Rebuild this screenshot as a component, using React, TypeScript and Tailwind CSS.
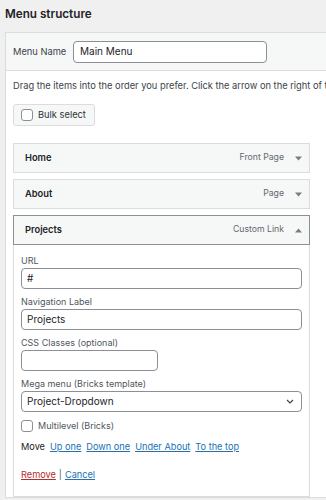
import React from 'react';

const font = { fontFamily: 'Inter, "Noto Sans", sans-serif' };

interface MenuItemProps {
  title: string;
  kind: string;
  open?: boolean;
}

const Caret = ({ up }: { up?: boolean }) => (
  <svg width="7" height="5" viewBox="0 0 7 5" className="ml-[11px]">
    {up ? <path d="M0 4.5 L3.5 0.5 L7 4.5 Z" fill="#787c82" /> : <path d="M0 0.5 L7 0.5 L3.5 4.5 Z" fill="#787c82" />}
  </svg>
);

const ItemBar: React.FC<MenuItemProps> = ({ title, kind, open }) => (
  <div
    className={`flex items-center h-[30px] pl-[11px] pr-[7px] bg-[#f6f7f7] border ${
      open ? 'border-[#8c8f94]' : 'border-[#dcdcde]'
    }`}
  >
    <span className="text-[9.3px] font-semibold text-[#1d2327]">{title}</span>
    <span className="ml-auto text-[8.7px] text-[#646970]">{kind}</span>
    <Caret up={open} />
  </div>
);

const Field = ({ label, value, narrow }: { label: string; value?: string; narrow?: boolean }) => (
  <div className="mb-[6px]">
    <div className="text-[9px] leading-[14px] text-[#50575e]">{label}</div>
    <div
      className={`h-[21px] border border-[#8c8f94] rounded-[4px] bg-white flex items-center px-[5px] text-[10px] text-[#1d2327] ${
        narrow ? 'w-[137px]' : 'w-full'
      }`}
    >
      {value}
    </div>
  </div>
);

const Box = () => (
  <span className="inline-block shrink-0 w-[12px] h-[12px] border border-[#8c8f94] rounded-[3px] bg-white" />
);

export default function App() {
  return (
    <div className="w-[326px] h-[500px] overflow-hidden bg-[#f0f0f1] text-[#1d2327]" style={font}>
      <h2 className="h-[32px] pl-[5px] pt-[6px] text-[11.7px] font-semibold leading-[16px]">Menu structure</h2>

      <div className="ml-[5px] w-[360px] bg-white border border-[#dcdcde]">
        <div className="h-[38px] bg-[#f6f7f7] border-b border-[#dcdcde] flex items-center pl-[7px]">
          <span className="text-[9.3px] text-[#3c434a] w-[60px] whitespace-nowrap">Menu Name</span>
          <div className="w-[194px] h-[22px] border border-[#8c8f94] rounded-[4px] bg-white flex items-center px-[6px] text-[10px]">
            Main Menu
          </div>
        </div>

        <div className="pl-[7px] pt-[5px]">
          <p className="text-[9.3px] leading-[20px] whitespace-nowrap text-[#3c434a]">
            Drag the items into the order you prefer. Click the arrow on the right of the item to reveal additional configuration options.
          </p>
          <button className="mt-[8px] h-[22px] pl-[7px] pr-[8px] flex items-center gap-[5px] bg-[#f6f7f7] border border-[#dcdcde] rounded-[3px] text-[9.3px] text-[#2c3338]">
            <Box />
            Bulk select
          </button>

          <div className="w-[297px] mt-[17px] flex flex-col gap-[6px]">
            <ItemBar title="Home" kind="Front Page" />
            <ItemBar title="About" kind="Page" />
            <div>
              <ItemBar title="Projects" kind="Custom Link" open />
              <div className="border border-t-0 border-[#dcdcde] pt-[9px] pb-[11px] px-[7px]">
                <Field label="URL" value="#" />
                <Field label="Navigation Label" value="Projects" />
                <Field label="CSS Classes (optional)" narrow />
                <div className="mb-[6px]">
                  <div className="text-[9px] leading-[14px] text-[#50575e]">Mega menu (Bricks template)</div>
                  <div className="h-[21px] border border-[#8c8f94] rounded-[4px] bg-white flex items-center pl-[5px] pr-[7px] text-[10px]">
                    Project-Dropdown
                    <svg width="8" height="5" viewBox="0 0 8 5" className="ml-auto">
                      <path d="M1 1 L4 4 L7 1" fill="none" stroke="#3c434a" strokeWidth="1.2" />
                    </svg>
                  </div>
                </div>
                <label className="flex items-center gap-[5px] h-[16px] text-[9px] text-[#50575e]">
                  <Box />
                  Multilevel (Bricks)
                </label>
                <div className="mt-[3px] flex items-center gap-[5px] h-[20px] text-[9.2px]">
                  <span className="text-[#1d2327]">Move</span>
                  <a className="text-[#2271b1] underline">Up one</a>
                  <a className="text-[#2271b1] underline">Down one</a>
                  <a className="text-[#2271b1] underline">Under About</a>
                  <a className="text-[#2271b1] underline">To the top</a>
                </div>
                <div className="mt-[8px] h-[20px] flex items-center gap-[3px] text-[9.2px]">
                  <a className="text-[#b32d2e] underline">Remove</a>
                  <span className="text-[#50575e]">|</span>
                  <a className="text-[#2271b1] underline">Cancel</a>
                </div>
              </div>
            </div>
          </div>
        </div>
      </div>
    </div>
  );
}
